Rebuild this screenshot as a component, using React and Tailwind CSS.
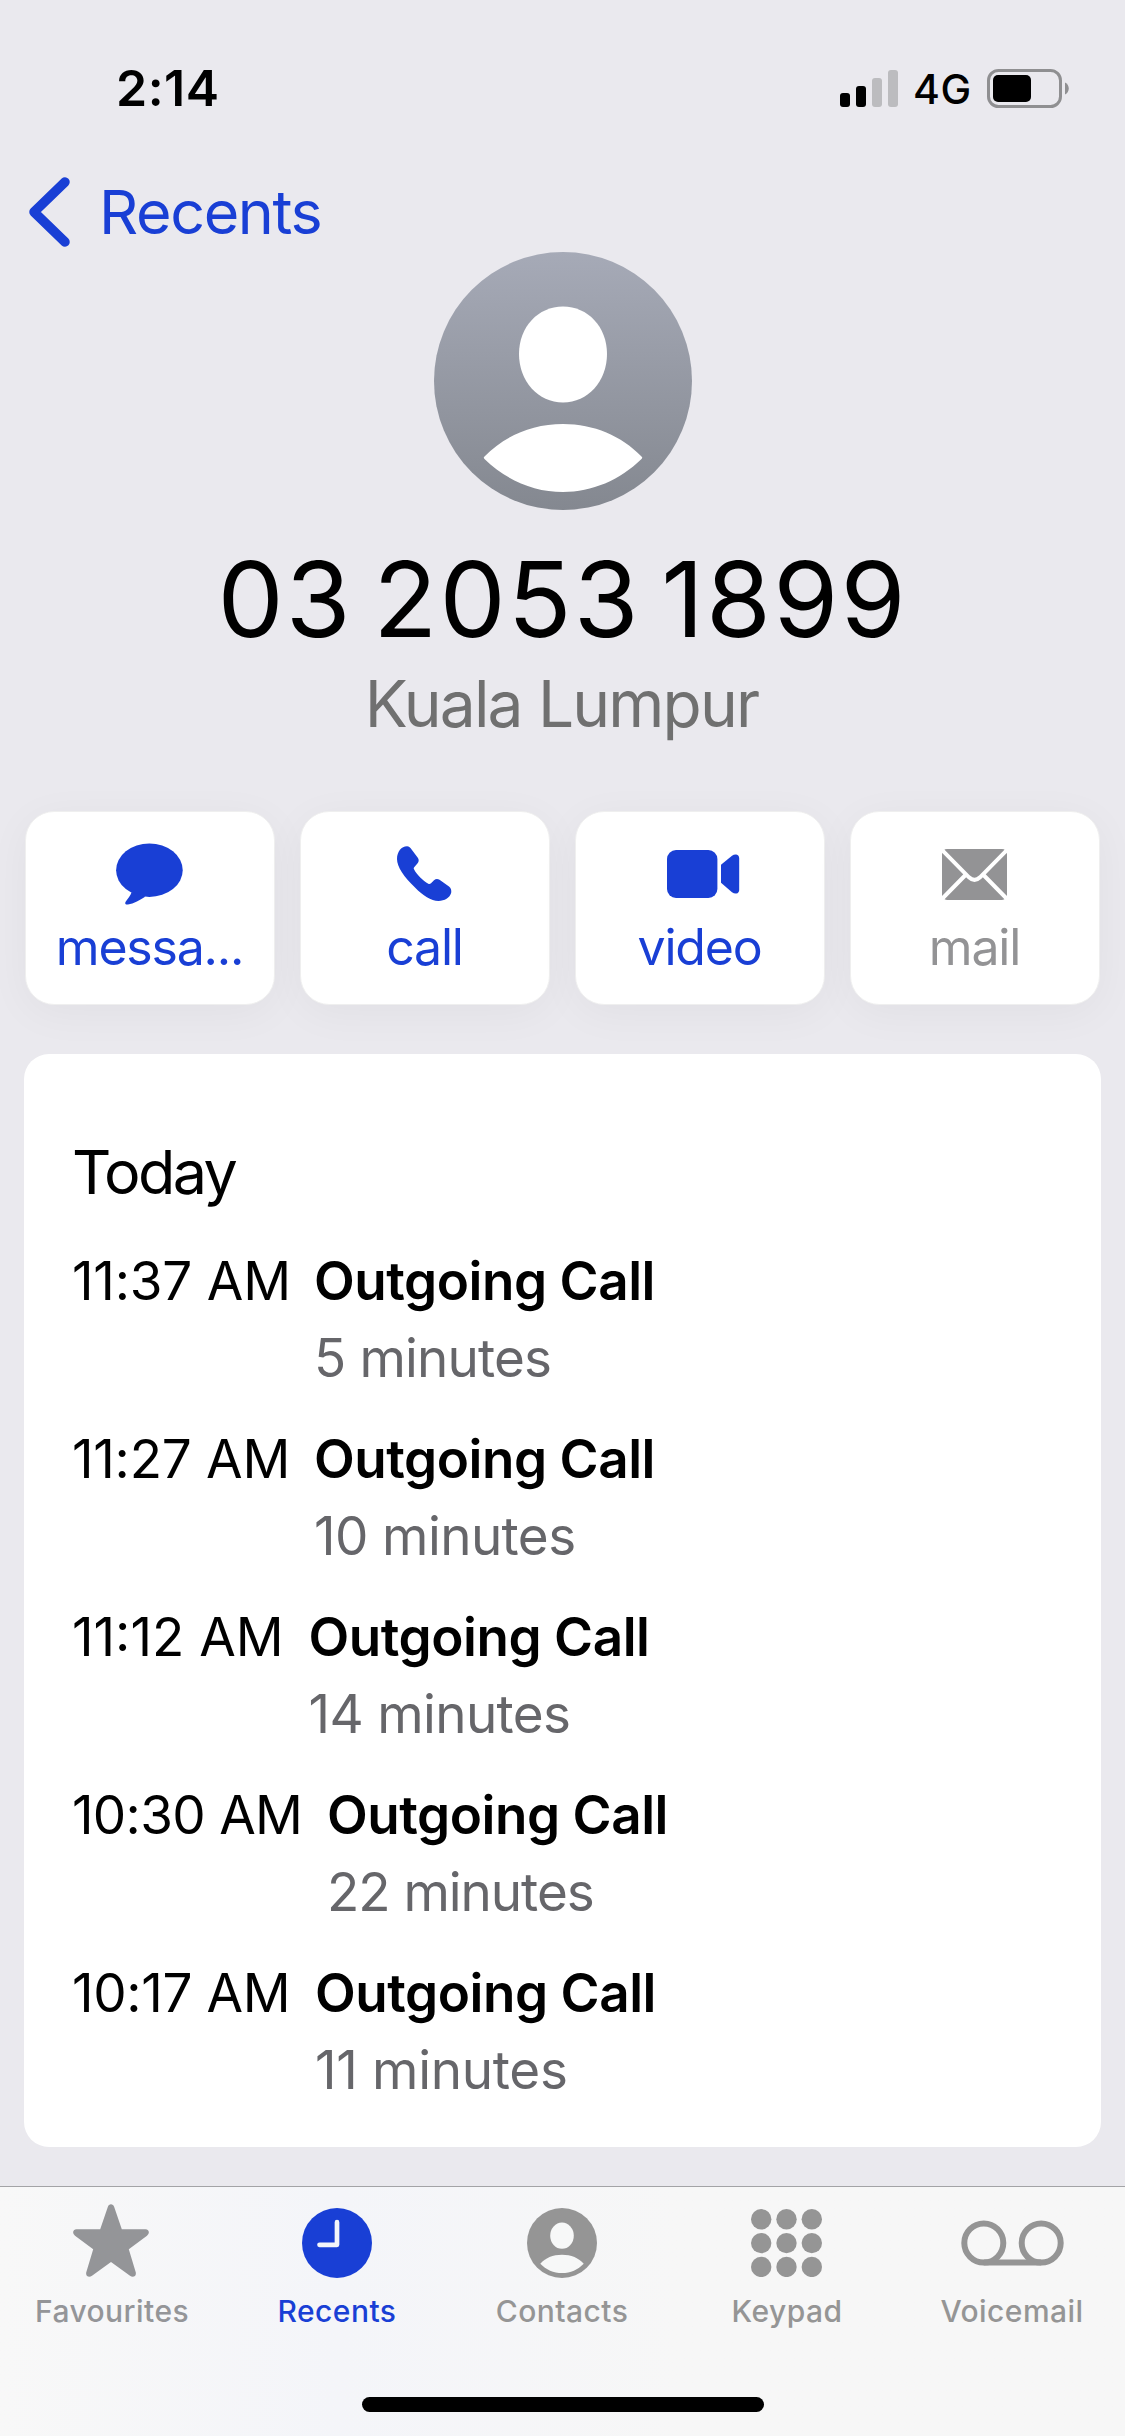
const calls = [
  { time: "11:37 AM", duration: "5 minutes", timeClass: "w-[242px] tracking-[-0.2px]", durationClass: "tracking-[-0.85px]" },
  { time: "11:27 AM", duration: "10 minutes", timeClass: "w-[242px] tracking-[-0.25px]", durationClass: "tracking-[-0.6px]" },
  { time: "11:12 AM", duration: "14 minutes", timeClass: "w-[236.5px] tracking-[0px]", durationClass: "tracking-[-0.65px]" },
  { time: "10:30 AM", duration: "22 minutes", timeClass: "w-[255px] tracking-[-0.7px]", durationClass: "tracking-[-1.05px]" },
  { time: "10:17 AM", duration: "11 minutes", timeClass: "w-[243px] tracking-[-0.35px]", durationClass: "tracking-[-0.3px]" },
];

function MessageIcon() {
  return (
    <svg className="mr-[1px]" width="67" height="62" viewBox="0 0 67 62" fill="currentColor">
      <ellipse cx="33.4" cy="27.2" rx="33.3" ry="26.7" />
      <path d="M15.7 49C14.5 53 11.5 56 9.8 58.4C8.4 60.6 9.9 61.8 12 61.6C17.5 60.8 24.5 57 29.5 53.6Z" />
    </svg>
  );
}

function PhoneIcon() {
  return (
    <svg className="mr-[2px]" width="55" height="56" viewBox="0 0 55 56" fill="currentColor">
      <path d="M10 .2C12 .2 13.5 1.5 14.6 3.4L20.8 11.8C22 13.6 22 15.5 20.6 17.3L17.2 21.3C16.6 22 16.6 22.6 17 23.3C20 29 26 34.5 31.3 37.8C32.3 38.2 33.2 38 34 37.3L37 34.2C38.8 32.6 40.7 32.6 42.5 33.8L52 40.6C54 42 54.6 44.5 54.2 46.8C52.8 51.8 47.5 55 41.5 55C34 55 26 49.5 18 41.5C7 31 0 21 0 13C0 5.5 4.5 .2 10 .2Z" />
    </svg>
  );
}

function VideoIcon() {
  return (
    <svg className="ml-[6px]" width="73" height="48" viewBox="0 0 73 48" fill="currentColor">
      <rect x="0" y="0" width="50.4" height="48" rx="9" />
      <path d="M54 14.8L65 5.8C66.4 4.7 68 4.4 69.3 4.6C71.2 5 72.2 6.4 72.2 8.5V39.7C72.2 41.8 71.2 43.2 69.3 43.5C68 43.7 66.4 43.3 65 42.2L54 32.8Z" />
    </svg>
  );
}

function MailIcon() {
  return (
    <svg className="mr-[2px]" width="65" height="51" viewBox="0 0 65 51" fill="none">
      <rect width="65" height="51" rx="5" fill="currentColor" />
      <g stroke="#fff" strokeWidth="4">
        <path d="M-1 0L27 28.3Q32.5 33.6 38 28.3L66 0" />
        <path d="M-1 51L23.5 26M66 51L41.5 26" />
      </g>
    </svg>
  );
}

function StarIcon() {
  return (
    <svg className="-mt-[5px] mr-[3px]" width="76" height="73" viewBox="0 0 76 73" fill="currentColor">
      <path d="M34.8 3C35.8 -.8 40.2 -.8 41.2 3L48.8 25.3H72.5C76.3 25.6 77 29.3 74 31.8L55.8 45.3L62.8 68.6C63.4 72.2 60 74 57 71.8L38 58L19 71.8C16 74 12.6 72.2 13.2 68.6L20.2 45.3L2 31.8C-1 29.3 -.3 25.6 3.5 25.3H27.2Z" />
    </svg>
  );
}

function ClockIcon() {
  return (
    <svg className="mr-[2px]" width="70" height="70" viewBox="0 0 70 70" fill="none">
      <circle cx="35" cy="35" r="35" fill="currentColor" />
      <path d="M35 14.2V36.8H17.5" stroke="#f3f5fa" strokeWidth="4.7" strokeLinecap="round" strokeLinejoin="round" />
    </svg>
  );
}

function ContactIcon() {
  return (
    <svg className="mr-[1px]" width="70" height="70" viewBox="0 0 70 70">
      <circle cx="35" cy="35" r="35" fill="currentColor" />
      <ellipse cx="35" cy="27.7" rx="11.8" ry="13.1" fill="#f7f8f8" />
      <path d="M13.3 55.7C18 50 26 46.7 35 46.7S52 50 56.7 55.7C51 61.7 43.5 65 35 65S19 61.7 13.3 55.7Z" fill="#f7f8f8" />
    </svg>
  );
}

function KeypadIcon() {
  return (
    <svg className="mr-[2px]" width="71" height="68" viewBox="0 0 71 68" fill="currentColor">
      {[10.3, 34.1, 57.9].map((cy) =>
        [10.2, 35.5, 60.8].map((cx) => <circle key={`${cx}-${cy}`} cx={cx} cy={cy} r="10.2" />)
      )}
    </svg>
  );
}

function VoicemailIcon() {
  return (
    <svg width="103" height="46" viewBox="0 0 103 46" fill="none" stroke="currentColor" strokeWidth="6">
      <circle cx="22.8" cy="23" r="19.5" />
      <circle cx="80.2" cy="23" r="19.5" />
      <path d="M22.8 42.5H80.2" />
    </svg>
  );
}

const actions = [
  { label: "messa...", Icon: MessageIcon, color: "text-[#193fd5]" },
  { label: "call", Icon: PhoneIcon, color: "text-[#193fd5]" },
  { label: "video", Icon: VideoIcon, color: "text-[#193fd5]" },
  { label: "mail", Icon: MailIcon, color: "text-[#939395]" },
];

const tabs = [
  { label: "Favourites", Icon: StarIcon, color: "text-[#949598]" },
  { label: "Recents", Icon: ClockIcon, color: "text-[#193fd5]" },
  { label: "Contacts", Icon: ContactIcon, color: "text-[#959595]" },
  { label: "Keypad", Icon: KeypadIcon, color: "text-[#959595]" },
  { label: "Voicemail", Icon: VoicemailIcon, color: "text-[#959595]" },
];

function StatusBar() {
  return (
    <div className="flex h-[177px] items-center pl-[116px] pr-[56px]">
      <span className="text-[50px] font-semibold tracking-[0.5px]">2:14</span>
      <div className="ml-auto flex items-center">
        <svg width="58" height="37" viewBox="0 0 58 37">
          <rect x="0" y="23" width="10" height="14" rx="3" />
          <rect x="16" y="16" width="10" height="21" rx="3" />
          <rect x="32" y="8" width="10" height="29" rx="3" fill="#bcbcbf" />
          <rect x="48" y="0" width="10" height="37" rx="3" fill="#bcbcbf" />
        </svg>
        <span className="ml-[15px] mt-[3px] w-[74px] text-[41px] font-medium tracking-[0.5px]">4G</span>
        <svg width="82" height="39" viewBox="0 0 82 39">
          <rect x="1.5" y="1.5" width="72" height="36" rx="10" fill="none" stroke="#8f8f91" strokeWidth="3" />
          <rect x="6" y="6" width="38" height="27" rx="5" />
          <path d="M78 13.5C83 15.5 83 23.5 78 25.5Z" fill="#8f8f91" />
        </svg>
      </div>
    </div>
  );
}

export default function App() {
  return (
    <div className="flex h-[2436px] w-[1125px] flex-col overflow-hidden bg-[#eae9ee] font-[Inter,sans-serif] text-black">
      <StatusBar />

      {/* Back navigation */}
      <div className="flex h-[70px] items-center pl-7 text-[#193fd5]">
        <svg width="43" height="70" viewBox="0 0 43 70" fill="none">
          <path d="M37 5L6 35L37 65" stroke="currentColor" strokeWidth="9.5" strokeLinecap="round" strokeLinejoin="round" />
        </svg>
        <span className="ml-7 mt-[2px] text-[61px] tracking-[-1.37px]">Recents</span>
      </div>

      {/* Contact header */}
      <div className="mt-[5px] flex flex-col items-center">
        <svg width="258" height="258" viewBox="0 0 258 258">
          <defs>
            <linearGradient id="avatar" x1="0" y1="0" x2="0" y2="1">
              <stop offset="0" stopColor="#a6aab7" />
              <stop offset="1" stopColor="#848890" />
            </linearGradient>
          </defs>
          <circle cx="129" cy="129" r="129" fill="url(#avatar)" />
          <path
            d="M129 54.5C154 54.5 173 75 173 102C173 129 154 150.5 129 150.5S85 129 85 102C85 75 104 54.5 129 54.5Z"
            fill="#fff"
          />
          <path
            d="M50.5 204.4C49.5 205.4 49.5 206 50.5 207C72 228 100 240 129 240S186 228 207.5 207C208.5 206 208.5 205.4 207.5 204.4C187.5 184 160 172 129 172S70.5 184 50.5 204.4Z"
            fill="#fff"
          />
        </svg>
        <h1 className="mt-[29px] text-[105px] leading-[120px] tracking-[2.1px] [word-spacing:-11px]">03 2053 1899</h1>
        <p className="mr-[2px] mt-[5px] text-[64px] leading-[80px] tracking-[-1.8px] text-[#707070]">Kuala Lumpur</p>
      </div>

      {/* Actions */}
      <div className="mt-[67px] grid grid-cols-4 gap-[25px] px-[25px]">
        {actions.map(({ label, Icon, color }) => (
          <div
            key={label}
            className={`flex h-[194px] flex-col items-center rounded-[29px] border border-[#efefef] bg-white pt-[31px] shadow-[0_8px_44px_rgba(0,0,0,0.045)] ${color}`}
          >
            <div className="flex h-[62px] items-center">
              <Icon />
            </div>
            <span className="mr-[1px] mt-3 text-[50px] leading-[60px] tracking-[-1.2px]">{label}</span>
          </div>
        ))}
      </div>

      {/* Call log */}
      <div className="relative mx-6 mt-[49px] h-[1093px] rounded-[25px] bg-white px-12 pt-[81px]">
        <h2 className="text-[61px] leading-[74px] tracking-[-2.6px]">Today</h2>
        <div className="mt-[34px] flex flex-col gap-6 text-[53px] leading-[77px]">
          {calls.map(({ time, duration, timeClass, durationClass }) => (
            <div key={time} className="flex">
              <span className={`whitespace-nowrap ${timeClass}`}>{time}</span>
              <div>
                <p className="font-semibold tracking-[-0.45px]">Outgoing Call</p>
                <p className={`text-[#66666a] ${durationClass}`}>{duration}</p>
              </div>
            </div>
          ))}
        </div>
      </div>

      {/* Tab bar */}
      <div className="mt-[39px] flex h-[250px] flex-col items-center border-t border-[#a3a3a6] bg-linear-to-r from-[#f8f8f8] via-[#f4f5f9] via-30% to-[#f7f7f7] to-60%">
        <div className="grid w-full grid-cols-5 pt-[19px]">
          {tabs.map(({ label, Icon, color }) => (
            <div key={label} className={`flex flex-col items-center ${color}`}>
              <div className="flex h-[74px] items-center">
                <Icon />
              </div>
              <span className="mr-px mt-[13px] text-[30px] font-medium leading-[36px] tracking-[0.45px]">{label}</span>
            </div>
          ))}
        </div>
        <div className="mt-[68px] h-[15px] w-[402px] rounded-full bg-black" />
      </div>
    </div>
  );
}
